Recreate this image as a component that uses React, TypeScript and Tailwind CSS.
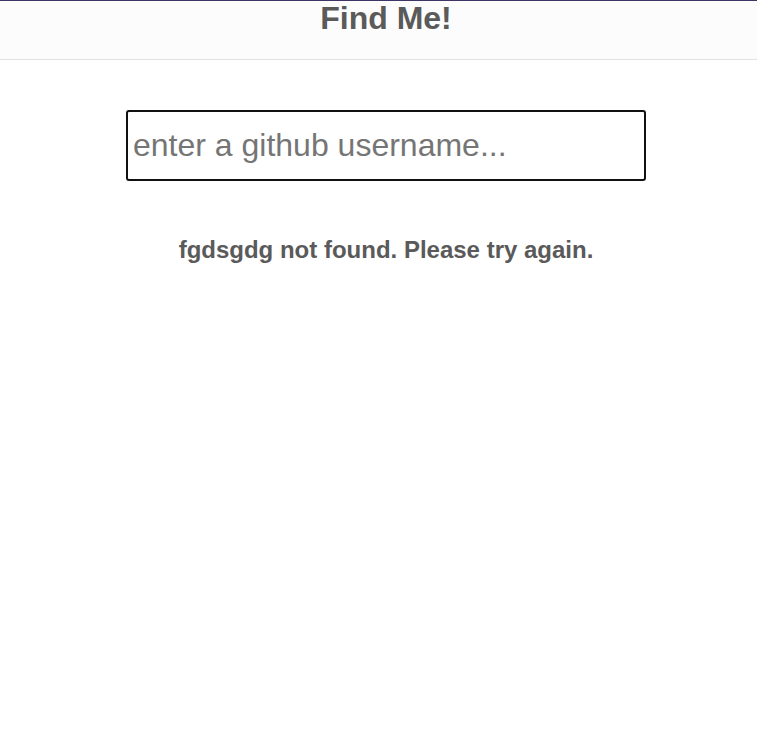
import React, { useState } from 'react';

function App() {
  const [username, setUsername] = useState('');

  return (
    <div className="min-h-screen bg-white font-['Liberation_Sans',Arial,sans-serif]">
      <header className="h-[60px] bg-[#fcfcfc] border-t border-t-[#3d3566] border-b border-b-[#e2e2e2] pl-[15px]">
        <h1 className="text-[32px] leading-[36px] font-bold text-[#5a5a5a] text-center -mt-px">Find Me!</h1>
      </header>
      <main className="flex flex-col items-center pl-[15px]">
        <input
          type="text"
          value={username}
          onChange={(e) => setUsername(e.target.value)}
          placeholder="enter a github username..."
          className="mt-[50px] w-[520px] h-[71px] border-2 border-[#111] rounded-[3px] px-[5px] text-[32px] text-[#555] placeholder:text-[#757575] outline-none"
        />
        <p className="mt-[55px] text-[24px] leading-[28px] font-bold text-[#5a5a5a]">fgdsgdg not found. Please try again.</p>
      </main>
    </div>
  );
}

export default App;
